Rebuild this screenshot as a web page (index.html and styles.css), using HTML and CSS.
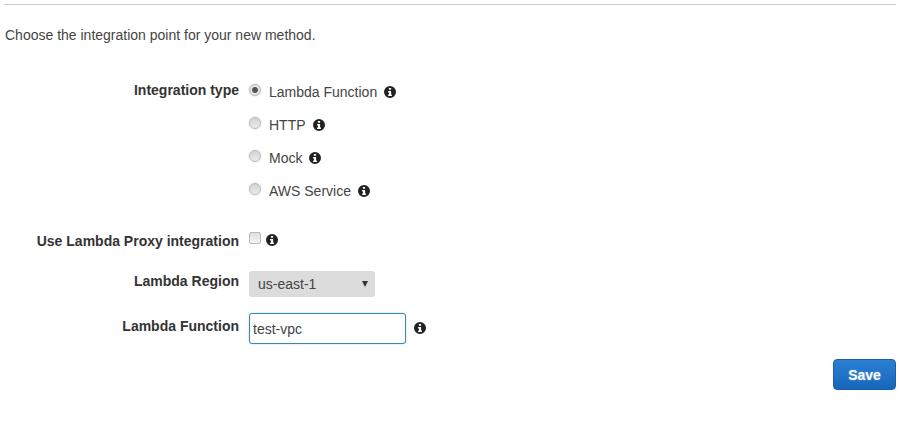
FILE: index.html
```html
<!DOCTYPE html>
<html lang="en">
<head>
    <meta charset="UTF-8">
    <title>Integration point</title>
    <link rel="stylesheet" href="styles.css">
</head>
<body>
    <svg class="icon-defs" width="0" height="0">
        <symbol id="info" viewBox="0 0 12 12">
            <path fill-rule="evenodd" d="M6 0a6 6 0 1 0 0 12A6 6 0 0 0 6 0ZM4.9 1.9h2.2v1.8H4.9ZM4.1 5h3v3.5h.8v1.6H4.1V8.5h.9V6.6h-.9Z"/>
        </symbol>
    </svg>

    <div class="container">
        <p class="intro">Choose the integration point for your new method.</p>

        <div class="row row-type">
            <label class="row-label">Integration type</label>
            <div class="radio-list">
                <div class="option">
                    <input type="radio" name="type" class="radio" checked>
                    <span>Lambda Function</span>
                    <svg class="info"><use href="#info"/></svg>
                </div>
                <div class="option">
                    <input type="radio" name="type" class="radio">
                    <span>HTTP</span>
                    <svg class="info"><use href="#info"/></svg>
                </div>
                <div class="option">
                    <input type="radio" name="type" class="radio">
                    <span>Mock</span>
                    <svg class="info"><use href="#info"/></svg>
                </div>
                <div class="option">
                    <input type="radio" name="type" class="radio">
                    <span>AWS Service</span>
                    <svg class="info"><use href="#info"/></svg>
                </div>
            </div>
        </div>

        <div class="row row-proxy">
            <label class="row-label">Use Lambda Proxy integration</label>
            <div class="proxy-control">
                <input type="checkbox" class="checkbox">
                <svg class="info"><use href="#info"/></svg>
            </div>
        </div>

        <div class="row row-region">
            <label class="row-label">Lambda Region</label>
            <div class="select-box">
                <span>us-east-1</span>
                <span class="caret"></span>
            </div>
        </div>

        <div class="row row-function">
            <label class="row-label">Lambda Function</label>
            <input type="text" class="text-field" value="test-vpc">
            <svg class="info info-field"><use href="#info"/></svg>
        </div>

        <div class="button-container">
            <button class="save-btn">Save</button>
        </div>
    </div>
</body>
</html>
```

FILE: styles.css
```css
/* General Reset */
* {
    margin: 0;
    padding: 0;
    box-sizing: border-box;
}

body {
    font-family: "Liberation Sans", Arial, sans-serif;
    font-size: 14px;
    line-height: 20px;
    color: #444;
    background-color: #fff;
}

.icon-defs {
    display: block;
    height: 0;
}

.container {
    margin: 4px 10px 0 4px;
    border-top: 1px solid #ccc;
    height: 420px;
}

.intro {
    margin: 20px 0 0 1px;
}

/* Form rows */
.row {
    display: flex;
    gap: 10px;
}

.row-label {
    flex: 0 0 235px;
    text-align: right;
    font-weight: bold;
    color: #333;
}

.row-type {
    margin-top: 35px;
}

.row-proxy {
    margin-top: 30px;
}

.row-region {
    margin-top: 20px;
}

.row-function {
    margin-top: 16px;
}

.row-function .row-label {
    margin-top: 3px;
}

/* Radios */
.radio-list {
    display: flex;
    flex-direction: column;
    gap: 13px;
    margin-top: 2px;
}

.option {
    display: flex;
    align-items: center;
    height: 20px;
    gap: 7px;
}

.radio {
    appearance: none;
    width: 12px;
    height: 12px;
    margin: -4px 1px 0 0;
    border: 1px solid #bbb;
    border-radius: 50%;
    background: linear-gradient(#d2d2d2, #ececec);
    box-shadow: 0 0 2px rgba(0, 0, 0, 0.2);
}

.radio:checked {
    background: radial-gradient(circle, #555 0, #555 2.5px, #e4e4e4 3.5px);
}

.info {
    display: block;
    width: 12px;
    height: 12px;
    fill: #222;
}

/* Checkbox */
.proxy-control {
    display: flex;
    align-items: center;
    height: 20px;
    gap: 5px;
}

.checkbox {
    appearance: none;
    width: 12px;
    height: 12px;
    margin-top: -6px;
    border: 1px solid #bbb;
    border-radius: 2px;
    background: linear-gradient(#dedede, #f4f4f4);
}

.proxy-control .info {
    margin-top: -2px;
}

/* Select */
.select-box {
    display: flex;
    justify-content: space-between;
    align-items: center;
    width: 126px;
    height: 26px;
    padding: 0 7px 0 9px;
    border-radius: 3px;
    background-color: #dcdcdc;
    color: #444;
}

.caret {
    width: 0;
    height: 0;
    border-left: 3px solid transparent;
    border-right: 3px solid transparent;
    border-top: 6px solid #333;
}

/* Text input */
.text-field {
    width: 157px;
    height: 31px;
    padding: 0 3px;
    font: inherit;
    color: #444;
    border: 1px solid #3b86b0;
    border-radius: 3px;
    outline: none;
    background-color: #fff;
    box-shadow: 0 0 2px rgba(60, 140, 180, 0.4);
}

.info-field {
    margin: 9px 0 0 -2px;
}

/* Save button */
.button-container {
    display: flex;
    justify-content: flex-end;
    margin-top: 15px;
}

.save-btn {
    width: 63px;
    height: 31px;
    font: inherit;
    font-weight: bold;
    color: #fff;
    text-shadow: 0 0 2px rgba(255, 255, 255, 0.4);
    border: 1px solid #1a5ea8;
    border-radius: 4px;
    background: linear-gradient(#2b80d2, #1666bb);
}
```
